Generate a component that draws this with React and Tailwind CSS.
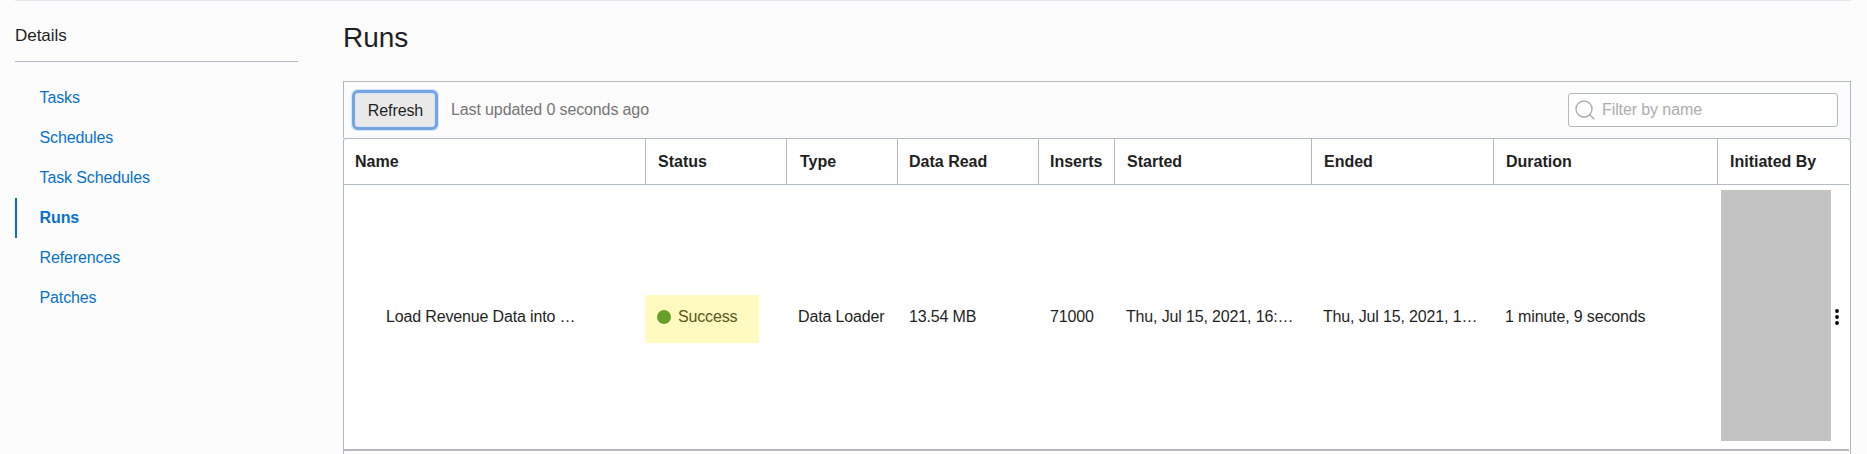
import React from "react";

const links = ["Tasks", "Schedules", "Task Schedules", "Runs", "References", "Patches"];

const columns = [
  { label: "Name", cls: "w-[301px] pl-[11px]", cell: "w-[301px] pl-[42px]", value: "Load Revenue Data into …" },
  { label: "Status", cls: "w-[141px] pl-[12px] border-l", cell: "w-[141px]", value: null },
  { label: "Type", cls: "w-[111px] pl-[13px] border-l", cell: "w-[111px] pl-[12px]", value: "Data Loader" },
  { label: "Data Read", cls: "w-[141px] pl-[11px] border-l", cell: "w-[141px] pl-[12px]", value: "13.54 MB" },
  { label: "Inserts", cls: "w-[76px] pl-[11px] border-l", cell: "w-[76px] pl-[12px]", value: "71000" },
  { label: "Started", cls: "w-[197px] pl-[12px] border-l", cell: "w-[197px] pl-[12px]", value: "Thu, Jul 15, 2021, 16:…" },
  { label: "Ended", cls: "w-[182px] pl-[12px] border-l", cell: "w-[182px] pl-[12px]", value: "Thu, Jul 15, 2021, 1…" },
  { label: "Duration", cls: "w-[224px] pl-[12px] border-l", cell: "w-[224px] pl-[12px]", value: "1 minute, 9 seconds" },
  { label: "Initiated By", cls: "w-[132px] pl-[12px] border-l", cell: "w-[132px]", value: null },
];

function Sidebar() {
  return (
    <nav className="w-[283px] shrink-0">
      <h2 className="h-[61px] border-b border-[#b6b8c4] pt-[23px] text-[17px] leading-6 tracking-[-0.05px]">Details</h2>
      <ul className="pt-4">
        {links.map((l) => (
          <li
            key={l}
            className={
              "h-10 border-l-2 pl-[22.5px] leading-10 text-[#0572ce] " +
              (l === "Runs" ? "border-[#0572ce] font-bold tracking-[-0.1px]" : "border-transparent tracking-[-0.12px]")
            }
          >
            {l}
          </li>
        ))}
      </ul>
    </nav>
  );
}

function StatusCell() {
  return (
    <div className="mt-1 flex h-12 w-[114px] items-center gap-[7px] bg-[#fffabf] pb-1 pl-3">
      <span className="size-[14px] rounded-full bg-[#66a02a]" />
      <span className="text-[#5b5720]">Success</span>
    </div>
  );
}

function InitiatedByCell() {
  return (
    <div className="flex items-center gap-1 pl-[4px]">
      <div className="mb-[3px] h-[251px] w-[110px] bg-[#c3c3c3]" />
      <svg className="h-4 w-1" viewBox="0 0 4 16" fill="#000">
        <circle cx="2" cy="2" r="1.9" />
        <circle cx="2" cy="8" r="1.9" />
        <circle cx="2" cy="14" r="1.9" />
      </svg>
    </div>
  );
}

export default function App() {
  return (
    <div className="h-[454px] w-[1867px] overflow-hidden bg-[#fcfcfc] pl-[15px] pr-4 font-['Liberation_Sans',Arial,sans-serif] text-[16px] text-[#1f1f1f]">
      <div className="flex h-full gap-[45px] border-t border-[#e6e7ed]">
        <Sidebar />
        <main className="flex w-[1508px] shrink-0 flex-col">
          <h1 className="h-20 pt-[21px] text-[28px] leading-8">Runs</h1>
          <div className="flex h-[57px] shrink-0 items-center justify-between border border-b-0 border-[#b3b8c2] px-3">
            <div className="flex items-center">
              <button className="h-8 w-[78px] rounded-[2px] bg-[#e9e9e9] pl-px pt-px tracking-[-0.1px] shadow-[0_0_0_5px_#d6e5f7] outline-3 outline-offset-1 outline-[#72a5e1]">
                Refresh
              </button>
              <span className="pl-[17px] tracking-[-0.12px] text-[#757575]">Last updated 0 seconds ago</span>
            </div>
            <div className="flex h-[34px] w-[270px] items-center gap-[7px] rounded-[3px] border border-[#b3b8c2] bg-white pl-[6px]">
              <svg className="size-5" viewBox="0 0 20 20" fill="none" stroke="#adadad" strokeWidth="1.4">
                <circle cx="9" cy="9" r="8" />
                <path d="M14.6 14.6L19.3 19.2" />
              </svg>
              <span className="tracking-[-0.1px] text-[#adadad]">Filter by name</span>
            </div>
          </div>
          <section className="flex flex-1 flex-col rounded-t-[3px] border border-b-0 border-[#b3b8c2] bg-white">
            <div className="mr-px flex h-[46px] shrink-0 border-b border-[#b3b8c2] font-bold leading-[45px]">
              {columns.map((c) => (
                <div key={c.label} className={"shrink-0 whitespace-nowrap border-[#b3b8c2] " + c.cls}>
                  {c.label}
                </div>
              ))}
            </div>
            <div className="mr-px flex h-[266px] shrink-0 items-center border-b-2 border-[#b3b8c2]">
              {columns.map((c) => (
                <div key={c.label} className={"shrink-0 whitespace-nowrap tracking-[-0.15px] " + c.cell}>
                  {c.label === "Status" ? <StatusCell /> : c.label === "Initiated By" ? <InitiatedByCell /> : c.value}
                </div>
              ))}
            </div>
          </section>
        </main>
      </div>
    </div>
  );
}
